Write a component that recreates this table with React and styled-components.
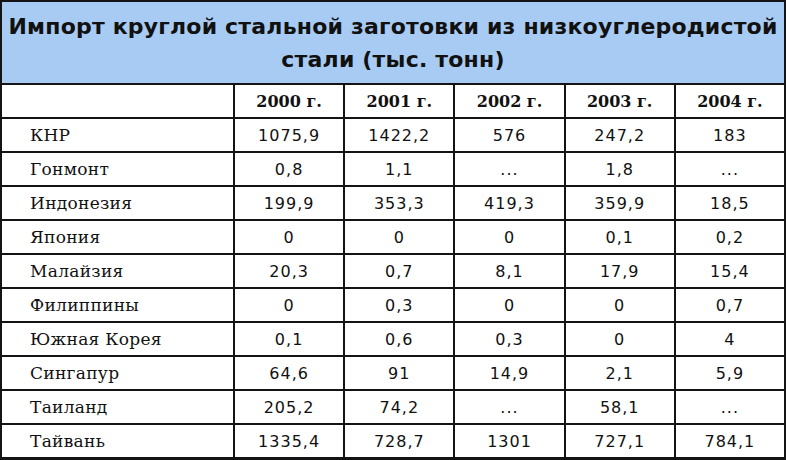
import styled, { createGlobalStyle } from 'styled-components';

const GlobalStyle = createGlobalStyle`
  html, body {
    margin: 0;
    padding: 0;
    background: #fff;
  }
`;

const Frame = styled.div`
  box-sizing: border-box;
  width: 786px;
  height: 460px;
  border: 2px solid #141414;
  display: flex;
  flex-direction: column;
  background: #141414;
`;

const Title = styled.div`
  height: 81px;
  background: #a7cbf2;
  border-bottom: 2px solid #141414;
  display: flex;
  flex-direction: column;
  justify-content: center;
  align-items: center;
  font-family: 'DejaVu Sans', sans-serif;
  font-weight: bold;
  font-size: 22px;
  letter-spacing: 0.2px;
  line-height: 33px;
  color: #111;
  text-align: center;
`;

const Grid = styled.div`
  flex: 1;
  display: grid;
  grid-template-columns: 231px repeat(5, 1fr);
  grid-auto-rows: 32px;
  gap: 2px;
`;

const Cell = styled.div`
  background: #fff;
  display: flex;
  align-items: center;
  justify-content: ${p => (p.$name ? 'flex-start' : 'center')};
  padding-left: ${p => (p.$name ? '28px' : '0')};
  font-family: ${p => (p.$name || p.$head ? "'DejaVu Serif', serif" : "'DejaVu Sans', sans-serif")};
  font-weight: ${p => (p.$head ? 'bold' : 'normal')};
  font-size: ${p => (p.$name ? '17px' : '16px')};
  letter-spacing: ${p => (p.$head ? '0' : p.$name ? '0.3px' : '1px')};
  color: #111;
`;

const years = ['2000 г.', '2001 г.', '2002 г.', '2003 г.', '2004 г.'];

const rows = [
  ['КНР', '1075,9', '1422,2', '576', '247,2', '183'],
  ['Гонмонт', '0,8', '1,1', '...', '1,8', '...'],
  ['Индонезия', '199,9', '353,3', '419,3', '359,9', '18,5'],
  ['Япония', '0', '0', '0', '0,1', '0,2'],
  ['Малайзия', '20,3', '0,7', '8,1', '17,9', '15,4'],
  ['Филиппины', '0', '0,3', '0', '0', '0,7'],
  ['Южная Корея', '0,1', '0,6', '0,3', '0', '4'],
  ['Сингапур', '64,6', '91', '14,9', '2,1', '5,9'],
  ['Таиланд', '205,2', '74,2', '...', '58,1', '...'],
  ['Тайвань', '1335,4', '728,7', '1301', '727,1', '784,1'],
];

const App = () => (
  <>
    <GlobalStyle />
    <Frame>
      <Title>
        <div>Импорт круглой стальной заготовки из низкоуглеродистой</div>
        <div>стали (тыс. тонн)</div>
      </Title>
      <Grid>
        <Cell />
        {years.map(y => (
          <Cell key={y} $head>
            {y}
          </Cell>
        ))}
        {rows.map(([name, ...vals]) => (
          <>
            <Cell key={name} $name>
              {name}
            </Cell>
            {vals.map((v, i) => (
              <Cell key={name + i}>{v}</Cell>
            ))}
          </>
        ))}
      </Grid>
    </Frame>
  </>
);

export default App;
